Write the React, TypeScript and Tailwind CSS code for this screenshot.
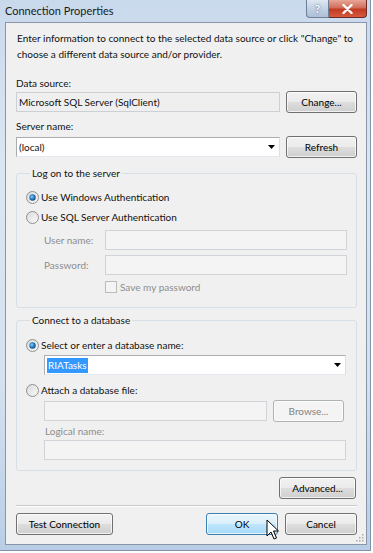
import React from 'react';

type BtnProps = {
  label: string;
  width: string;
  variant?: 'normal' | 'hot' | 'disabled';
  className?: string;
};

const WinButton: React.FC<BtnProps> = ({ label, width, variant = 'normal', className = '' }) => {
  const skin =
    variant === 'hot'
      ? 'border-[#3c7fb1] bg-[linear-gradient(180deg,#eaf6fd_0%,#d9f0fc_48%,#bee6fd_52%,#a7d9f5_100%)] text-black'
      : variant === 'disabled'
        ? 'border-[#adb2b5] bg-[#f4f4f4] text-[#838383]'
        : 'border-[#707070] bg-[linear-gradient(180deg,#f2f2f2_0%,#ebebeb_48%,#dddddd_52%,#cfcfcf_100%)] text-black';
  return (
    <div
      className={`${width} h-[22px] shrink-0 rounded-[3px] border ${skin} flex items-center justify-center shadow-[inset_0_0_0_1px_rgba(255,255,255,0.7)] ${className}`}
    >
      {label}
    </div>
  );
};

// radio button, Win7 style
const Radio: React.FC<{ checked?: boolean; id: string }> = ({ checked, id }) => (
  <svg width="13" height="13" viewBox="0 0 13 13" className="shrink-0">
    <defs>
      <linearGradient id={`rb-${id}`} x1="0" y1="0" x2="1" y2="1">
        <stop offset="0" stopColor="#d5d5d5" />
        <stop offset="1" stopColor="#ffffff" />
      </linearGradient>
      <radialGradient id={`rd-${id}`} cx="0.4" cy="0.4" r="0.7">
        <stop offset="0" stopColor="#8fd4fb" />
        <stop offset="0.5" stopColor="#2a7cc0" />
        <stop offset="1" stopColor="#0c3f78" />
      </radialGradient>
    </defs>
    <circle cx="6.5" cy="6.5" r="6" fill={`url(#rb-${id})`} stroke="#8e8f8f" strokeWidth="1" />
    <circle cx="6.5" cy="6.5" r="4.2" fill="none" stroke="#e8e8e8" strokeWidth="0.8" />
    {checked && <circle cx="6.5" cy="6.5" r="3.2" fill={`url(#rd-${id})`} />}
  </svg>
);

const Arrow = () => (
  <svg width="7" height="4" viewBox="0 0 7 4" className="shrink-0">
    <path d="M0 0h7L3.5 4z" fill="#000" />
  </svg>
);

const Field: React.FC<{ className?: string; disabled?: boolean; children?: React.ReactNode }> = ({
  className = '',
  disabled,
  children,
}) => (
  <div
    className={`h-[20px] shrink-0 border ${
      disabled ? 'border-[#d0d4d9] bg-[#f4f4f4]' : 'border-[#abadb3] border-b-[#e3e9ef] border-r-[#dbdfe6] bg-white'
    } flex items-center ${className}`}
  >
    {children}
  </div>
);

export default function App() {
  return (
    <div className="relative w-[373px] h-[553px] bg-white overflow-hidden font-['Lato',sans-serif] text-[10px] text-[#111] leading-[16px]">
      <div className="w-[371px] h-[551px] bg-[linear-gradient(180deg,#c9d9ec_0%,#dae6f3_30%,#d3e1f0_70%,#b9cee6_100%)] border-r border-b border-[#8193aa] flex flex-col">
        {/* title bar */}
        <div className="h-[22px] shrink-0 flex items-start justify-between pl-[5px] pr-[3px]">
          <span className="mt-[3px] text-[11px] text-[#1a1a1a]">Connection Properties</span>
          <div className="flex">
            <div className="w-[23px] h-[18px] rounded-bl-[4px] border border-t-0 border-[#6e7f96] bg-[linear-gradient(180deg,#dfe7f1,#c2d1e3_50%,#aebfd6)] flex items-center justify-center text-[11px] font-bold text-white [text-shadow:0_0_2px_#44546a]">
              ?
            </div>
            <div className="w-[38px] h-[18px] rounded-br-[4px] border border-t-0 border-l-0 border-[#6b2b23] bg-[linear-gradient(180deg,#e8a596,#d16e5a_45%,#c23b23_55%,#d65a3d)] flex items-center justify-center">
              <svg width="11" height="10" viewBox="0 0 11 10">
                <path d="M1.5 1 L9.5 9 M9.5 1 L1.5 9" stroke="#ffffff" strokeWidth="2.4" strokeLinecap="round" />
              </svg>
            </div>
          </div>
        </div>

        {/* client area */}
        <div className="relative ml-[5px] w-[362px] h-[523px] shrink-0 border border-[#8996a8] bg-[#f0f0f0] pl-[10px] pr-[9px] pt-[7px] flex flex-col">
          <p className="leading-[16px] h-[32px] -mr-[8px] pl-[1px]">
            Enter information to connect to the selected data source or click "Change" to choose a different data
            source and/or provider.
          </p>

          <div className="mt-[13px] h-[16px]">Data source:</div>
          <div className="flex gap-[6px] items-start">
            <div className="mt-[1px] w-[264px] h-[20px] border border-[#ccd0d4] bg-[#efefef] flex items-center px-[2px]">
              Microsoft SQL Server (SqlClient)
            </div>
            <WinButton label="Change..." width="w-[71px]" />
          </div>

          <div className="mt-[5px] h-[16px]">Server name:</div>
          <div className="mt-[2px] flex gap-[6px] items-start">
            <Field className="mt-[1px] w-[264px] pl-[2px] pr-[4px] justify-between">
              <span>(local)</span>
              <Arrow />
            </Field>
            <WinButton label="Refresh" width="w-[71px]" />
          </div>

          {/* Log on group */}
          <fieldset className="mt-[7px] border border-[#d5dfe5] rounded-[3px] pl-[9px] pr-[9px] pb-[12px]">
            <legend className="ml-[4px] px-[2px] leading-[16px]">Log on to the server</legend>
            <div className="mt-[8px] flex items-center gap-[2px] h-[16px]">
              <Radio checked id="a" />
              <span>Use Windows Authentication</span>
            </div>
            <div className="mt-[4px] flex items-center gap-[2px] h-[16px]">
              <Radio id="b" />
              <span>Use SQL Server Authentication</span>
            </div>
            <div className="mt-[5px] flex items-center">
              <span className="w-[79px] shrink-0 pl-[18px] text-[#8d8d8d] whitespace-nowrap">User name:</span>
              <Field disabled className="w-[242px]" />
            </div>
            <div className="mt-[5px] flex items-center">
              <span className="w-[79px] shrink-0 pl-[18px] text-[#8d8d8d] whitespace-nowrap">Password:</span>
              <Field disabled className="w-[242px]" />
            </div>
            <div className="mt-[4px] flex items-center h-[16px] pl-[79px] gap-[3px]">
              <div className="w-[12px] h-[12px] border border-[#bcbcbc] bg-[#f4f4f4]" />
              <span className="text-[#8d8d8d]">Save my password</span>
            </div>
          </fieldset>

          {/* Connect group */}
          <fieldset className="mt-[4px] border border-[#d5dfe5] rounded-[3px] pl-[9px] pr-[9px] pb-[10px]">
            <legend className="ml-[4px] px-[2px] leading-[16px]">Connect to a database</legend>
            <div className="mt-[9px] flex items-center gap-[2px] h-[16px]">
              <Radio checked id="c" />
              <span>Select or enter a database name:</span>
            </div>
            <Field className="mt-[2px] ml-[18px] w-[302px] pl-[2px] pr-[4px] justify-between">
              <span className="bg-[#3399ff] text-white px-[1px] leading-[15px]">RIATasks</span>
              <Arrow />
            </Field>
            <div className="mt-[7px] flex items-center gap-[2px] h-[16px]">
              <Radio id="d" />
              <span>Attach a database file:</span>
            </div>
            <div className="mt-[2px] ml-[18px] flex items-center gap-[6px]">
              <Field disabled className="w-[223px]" />
              <WinButton label="Browse..." width="w-[71px]" variant="disabled" />
            </div>
            <div className="mt-[1px] ml-[19px] h-[16px] text-[#8d8d8d]">Logical name:</div>
            <Field disabled className="mt-[1px] ml-[18px] w-[302px]" />
          </fieldset>

          <div className="mt-[6px] flex justify-end pr-[1px]">
            <WinButton label="Advanced..." width="w-[77px]" />
          </div>

          <div className="mt-[6px] h-[2px] border-t border-[#c5c9ce] border-b border-b-white" />

          <div className="mt-[6px] flex items-start">
            <WinButton label="Test Connection" width="w-[97px]" />
            <div className="flex-1" />
            <WinButton label="OK" width="w-[72px]" variant="hot" />
            <WinButton label="Cancel" width="w-[72px]" className="ml-[7px]" />
          </div>

          {/* resize grip */}
          <svg width="10" height="10" viewBox="0 0 10 10" className="absolute right-[2px] bottom-[2px]">
            {[
              [8, 2],
              [8, 5],
              [5, 5],
              [8, 8],
              [5, 8],
              [2, 8],
            ].map(([x, y], i) => (
              <rect key={i} x={x} y={y} width="1.5" height="1.5" fill="#a9a9a9" />
            ))}
          </svg>
        </div>
      </div>

      {/* mouse pointer over OK */}
      <svg width="14" height="22" viewBox="0 0 14 22" className="absolute left-[266px] top-[519px]">
        <path
          d="M1 1 L1 17 L5 13 L8 20 L10.5 19 L7.5 12 L12.5 12 Z"
          fill="#ffffff"
          stroke="#000000"
          strokeWidth="1"
          strokeLinejoin="round"
        />
      </svg>
    </div>
  );
}
